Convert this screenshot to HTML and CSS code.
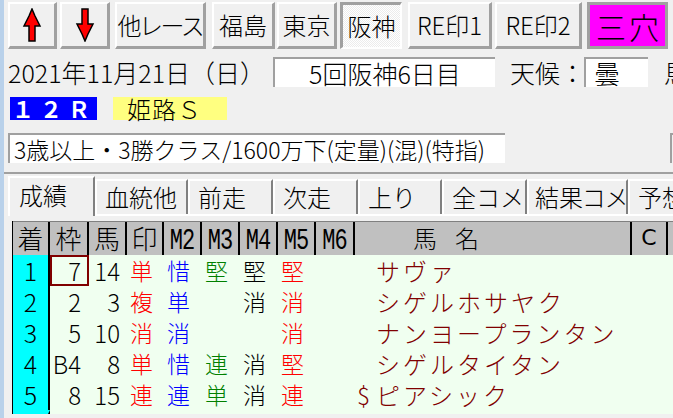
FILE: index.html
```html
<!DOCTYPE html>
<html lang="ja">
<head>
    <meta charset="UTF-8">
    <title>成績</title>
    <link rel="stylesheet" href="styles.css">
</head>
<body>
    <div class="window">
        <div class="toolbar">
            <button class="btn btn-up">
                <svg width="20" height="34" viewBox="0 0 20 34"><path d="M10 1 L13 8 L18 18 L13 18 L13 33 L7 33 L7 18 L2 18 L7 8 Z" fill="#ff0000" stroke="#000000" stroke-width="1.5" stroke-linejoin="miter"/></svg>
            </button>
            <button class="btn btn-down">
                <svg width="20" height="34" viewBox="0 0 20 34"><path d="M7 1 L13 1 L13 16 L18 16 L13 26 L10 33 L7 26 L2 16 L7 16 Z" fill="#ff0000" stroke="#000000" stroke-width="1.5" stroke-linejoin="miter"/></svg>
            </button>
            <button class="btn btn-other">他レース</button>
            <button class="btn btn-fukushima">福島</button>
            <button class="btn btn-tokyo">東京</button>
            <button class="btn btn-hanshin pressed">阪神</button>
            <button class="btn btn-re1">RE印1</button>
            <button class="btn btn-re2">RE印2</button>
            <button class="btn btn-ana">三穴</button>
        </div>

        <div class="info-row">
            <div class="date">2021年11月21日（日）</div>
            <div class="field field-kai">5回阪神6日目</div>
            <div class="label label-weather">天候：</div>
            <div class="field field-weather">曇</div>
            <div class="label label-baba">馬場</div>
        </div>

        <div class="race-row">
            <div class="race-no">１２Ｒ</div>
            <div class="race-name">姫路Ｓ</div>
        </div>

        <div class="cond-row">
            <div class="field field-cond">3歳以上・3勝クラス/1600万下(定量)(混)(特指)</div>
            <div class="field field-extra"></div>
        </div>

        <div class="tabbar">
            <div class="tabs">
                <div class="tab active tab-seiseki">成績</div>
                <div class="tab tab-kettou">血統他</div>
                <div class="tab">前走</div>
                <div class="tab">次走</div>
                <div class="tab tab-agari">上り</div>
                <div class="tab">全コメ</div>
                <div class="tab tab-kekka">結果コメ</div>
                <div class="tab tab-last">予想</div>
            </div>
        </div>

        <div class="grid">
            <div class="grid-line grid-head">
                <span class="hc">着</span>
                <span class="hc">枠</span>
                <span class="hc">馬</span>
                <span class="hc">印</span>
                <span class="hc hc-m"><span>M2</span></span>
                <span class="hc hc-m"><span>M3</span></span>
                <span class="hc hc-m"><span>M4</span></span>
                <span class="hc hc-m"><span>M5</span></span>
                <span class="hc hc-m"><span>M6</span></span>
                <span class="hc hc-name">馬名</span>
                <span class="hc hc-c">C</span>
                <span class="hc hc-rest"></span>
            </div>

            <div class="grid-line grid-row">
                <span class="c-rank">1</span>
                <span class="c-num c-waku selected">7</span>
                <span class="c-num c-uma">14</span>
                <span class="c-mark red">単</span>
                <span class="c-mark blue">惜</span>
                <span class="c-mark green">堅</span>
                <span class="c-mark">堅</span>
                <span class="c-mark red">堅</span>
                <span class="c-mark"></span>
                <span class="c-name"><span class="c-pre"></span>サヴァ</span>
                <span></span><span></span>
            </div>
            <div class="grid-line grid-row">
                <span class="c-rank">2</span>
                <span class="c-num c-waku">2</span>
                <span class="c-num c-uma">3</span>
                <span class="c-mark red">複</span>
                <span class="c-mark blue">単</span>
                <span class="c-mark green"></span>
                <span class="c-mark">消</span>
                <span class="c-mark red">消</span>
                <span class="c-mark"></span>
                <span class="c-name"><span class="c-pre"></span>シゲルホサヤク</span>
                <span></span><span></span>
            </div>
            <div class="grid-line grid-row">
                <span class="c-rank">3</span>
                <span class="c-num c-waku">5</span>
                <span class="c-num c-uma">10</span>
                <span class="c-mark red">消</span>
                <span class="c-mark blue">消</span>
                <span class="c-mark green"></span>
                <span class="c-mark"></span>
                <span class="c-mark red">消</span>
                <span class="c-mark"></span>
                <span class="c-name"><span class="c-pre"></span>ナンヨープランタン</span>
                <span></span><span></span>
            </div>
            <div class="grid-line grid-row">
                <span class="c-rank">4</span>
                <span class="c-num c-waku">B4</span>
                <span class="c-num c-uma">8</span>
                <span class="c-mark red">単</span>
                <span class="c-mark blue">惜</span>
                <span class="c-mark green">連</span>
                <span class="c-mark">消</span>
                <span class="c-mark red">堅</span>
                <span class="c-mark"></span>
                <span class="c-name"><span class="c-pre"></span>シゲルタイタン</span>
                <span></span><span></span>
            </div>
            <div class="grid-line grid-row">
                <span class="c-rank">5</span>
                <span class="c-num c-waku">8</span>
                <span class="c-num c-uma">15</span>
                <span class="c-mark red">連</span>
                <span class="c-mark blue">連</span>
                <span class="c-mark green">単</span>
                <span class="c-mark">消</span>
                <span class="c-mark red">連</span>
                <span class="c-mark"></span>
                <span class="c-name"><span class="c-pre">$</span>ピアシック</span>
                <span></span><span></span>
            </div>
            <div class="grid-line grid-row grid-row-next">
                <span class="c-rank"></span>
            </div>
        </div>
    </div>
</body>
</html>
```

FILE: styles.css
```css
body {
    margin: 0;
    width: 673px;
    height: 418px;
    overflow: hidden;
    background: #f0f0f0;
    font-family: "Noto Sans CJK JP", sans-serif;
    font-weight: 300;
    color: #000000;
}
.window {
    height: 100%;
    box-sizing: border-box;
    border-left: 4px solid #b9d1ea;
    padding-left: 4px;
    overflow: hidden;
}

/* ボタン列 */
.toolbar {
    display: flex;
    padding-top: 2px;
    height: 47px;
}
.btn {
    height: 47px;
    box-sizing: border-box;
    flex-shrink: 0;
    padding: 0;
    margin: 0 0 0 3px;
    display: flex;
    align-items: center;
    justify-content: center;
    background: #f0f0f0;
    border-style: solid;
    border-width: 2px 3px 3px 2px;
    border-color: #ffffff #a0a0a0 #a0a0a0 #ffffff;
    font-family: "Noto Sans CJK JP", sans-serif;
    font-weight: 300;
    font-size: 24px;
    font-feature-settings: "palt";
    line-height: 1;
    white-space: nowrap;
    color: #000000;
}
.btn-up { width: 49px; margin-left: 0; }
.btn-down { width: 50px; }
.btn-other { width: 91px; margin-left: 5px; letter-spacing: -1px; }
.btn-fukushima { width: 63px; margin-left: 6px; }
.btn-tokyo { width: 60px; margin-left: 2px; }
.btn-hanshin { width: 62px; }
.btn-re1 { width: 84px; margin-left: 6px; }
.btn-re2 { width: 87px; }
.btn-ana {
    width: 81px;
    margin-left: 5px;
    background: #ff00ff;
    border-width: 3px;
    border-color: #a0a0a0;
    font-size: 30px;
    letter-spacing: 3px;
    padding-left: 3px;
}
.pressed {
    border-width: 3px 2px 2px 3px;
    border-color: #a0a0a0 #ffffff #ffffff #a0a0a0;
    background: repeating-conic-gradient(#ffffff 0 25%, #ececec 0 50%) 0 0 / 2px 2px;
}

/* 日付行 */
.info-row {
    display: flex;
    align-items: center;
    height: 30px;
    margin-top: 8px;
    font-size: 25px;
    line-height: 1;
    white-space: nowrap;
}
.date {
    width: 265px;
    flex-shrink: 0;
}
.field {
    height: 30px;
    box-sizing: border-box;
    flex-shrink: 0;
    display: flex;
    align-items: center;
    justify-content: center;
    background: #ffffff;
    border-style: solid;
    border-width: 2px 0 0 2px;
    border-color: #a0a0a0;
}
.field-kai { width: 222px; }
.label { flex-shrink: 0; }
.label-weather { margin-left: 15px; width: 74px; }
.field-weather { width: 64px; font-size: 26px; justify-content: flex-start; padding-left: 8px; }
.label-baba { margin-left: 16px; }

/* レース番号・名前 */
.race-row {
    display: flex;
    height: 23px;
    margin-top: 10px;
    line-height: 23px;
    white-space: nowrap;
}
.race-no {
    width: 87px;
    margin-left: 2px;
    padding-left: 2px;
    box-sizing: border-box;
    background: #0000ff;
    color: #ffffff;
    font-size: 22px;
    font-weight: bold;
    letter-spacing: 6px;
}
.race-name {
    width: 114px;
    margin-left: 16px;
    padding-left: 14px;
    box-sizing: border-box;
    background: #ffff80;
    font-size: 24px;
    letter-spacing: 1px;
}

/* 条件 */
.cond-row {
    display: flex;
    height: 30px;
    margin-top: 13px;
}
.field-cond {
    width: 497px;
    justify-content: flex-start;
    padding-left: 4px;
    font-size: 23px;
    line-height: 1;
    white-space: nowrap;
}
.field-extra {
    width: 40px;
    margin-left: 165px;
    background: transparent;
}

/* タブ */
.tabbar {
    margin: 9px 0 0 -4px;
    padding-left: 4px;
    border-top: 2px solid #a0a0a0;
}
.tabs {
    display: flex;
    height: 40px;
    align-items: flex-end;
    border-bottom: 2px solid #ffffff;
    white-space: nowrap;
}
.tab {
    width: 85px;
    height: 35px;
    flex-shrink: 0;
    box-sizing: border-box;
    padding-left: 8px;
    border-style: solid;
    border-width: 2px 2px 0 2px;
    border-color: #ffffff #808080 #ffffff #ffffff;
    font-size: 24px;
    line-height: 31px;
}
.tab.active {
    height: 40px;
    margin-bottom: -2px;
    background: #f0f0f0;
    line-height: 34px;
}
.tab-seiseki { width: 87px; padding-left: 9px; }
.tab-kettou { width: 93px; }
.tab-agari { width: 84px; }
.tab-kekka { width: 101px; padding-left: 6px; font-feature-settings: "palt"; }
.tab-last { width: 60px; border-right: none; }

/* 成績表 */
.grid {
    height: 193px;
    margin: 5px 0 0 4px;
    border-left: 1px solid #000000;
    overflow: hidden;
}
.grid-line {
    display: grid;
    grid-template-columns: 37px 39px 38px 37px 38px 38px 38px 38px 39px 277px 36px 1fr;
}
.grid-head {
    height: 34px;
    box-sizing: border-box;
    background: #c0c0c0;
    border-top: 1px solid #808080;
}
.hc {
    border-right: 2px solid #000000;
    text-align: center;
    font-size: 26px;
    line-height: 32px;
}
.hc-m span {
    display: inline-block;
    font-family: "Liberation Mono", monospace;
    font-weight: normal;
    font-size: 22px;
    line-height: 20px;
    vertical-align: middle;
    transform: scaleY(1.3);
    letter-spacing: -1px;
}
.hc-name {
    text-align: left;
    padding-left: 58px;
    font-size: 24px;
    letter-spacing: 18px;
}
.hc-c {
    font-family: "DejaVu Sans", sans-serif;
    font-weight: normal;
    font-size: 22px;
}
.hc-rest { border-right: none; }

.grid-row {
    height: 31px;
    background: #f0fff0;
    font-size: 24px;
    line-height: 31px;
    white-space: nowrap;
}
.c-rank {
    background: #00ffff;
    border-right: 2px solid #000000;
    text-align: center;
    font-size: 25px;
}
.c-num {
    text-align: right;
    padding-right: 6px;
    box-sizing: border-box;
}
.c-waku { padding-right: 8px; }
.c-uma { padding-right: 7px; }
.selected {
    box-shadow: inset 0 0 0 2px #800000;
}
.c-mark {
    padding-left: 3px;
    font-size: 23px;
}
.c-name {
    color: #800000;
    padding-left: 2px;
    letter-spacing: 3px;
    font-size: 24px;
}
.c-pre {
    display: inline-block;
    width: 19px;
    letter-spacing: 0;
    font-size: 24px;
}
.grid-row-next .c-rank {
    background: #0000ff;
    border-top: 4px solid #00ffff;
}
.red { color: #ff0000; }
.blue { color: #0000ff; }
.green { color: #008000; }
```
